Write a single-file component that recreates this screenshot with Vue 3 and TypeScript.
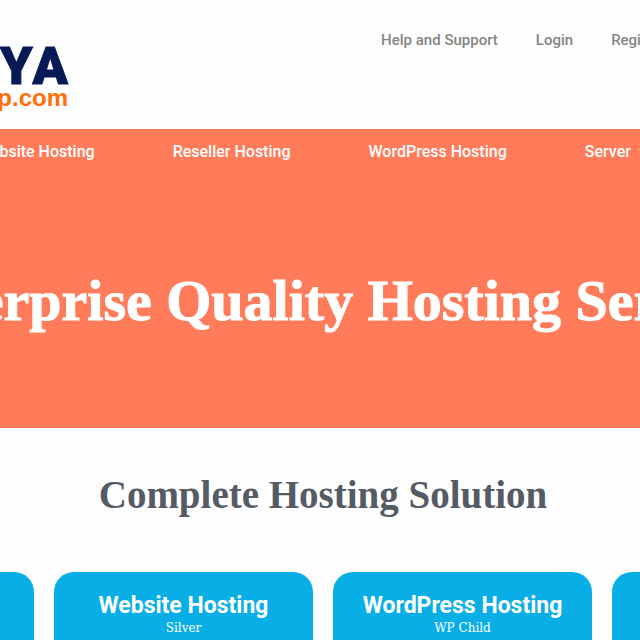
<script setup lang="ts">
interface Plan {
  name: string
  tier: string
}

const accountLinks: string[] = ['Help and Support', 'Login', 'Register']
const services: string[] = ['Website Hosting', 'Reseller Hosting', 'WordPress Hosting']
const plans: Plan[] = [
  { name: '', tier: '' },
  { name: 'Website Hosting', tier: 'Silver' },
  { name: 'WordPress Hosting', tier: 'WP Child' },
  { name: '', tier: '' },
]
</script>

<template>
  <div class="page">
    <header class="top">
      <a class="logo" href="#">
        <span class="logo-name">YA</span>
        <span class="logo-domain">p.com</span>
      </a>
      <nav class="account" aria-label="Account">
        <a v-for="link in accountLinks" :key="link" href="#">{{ link }}</a>
      </nav>
    </header>

    <section class="hero">
      <nav class="services" aria-label="Services">
        <a v-for="service in services" :key="service" href="#">{{ service }}</a>
        <a class="has-menu" href="#">
          Server
          <svg width="10" height="6" viewBox="0 0 10 6" aria-hidden="true">
            <path d="M0 0h10L5 6z" fill="currentColor" />
          </svg>
        </a>
      </nav>
      <div class="banner">
        <h1>Enterprise Quality Hosting Services</h1>
      </div>
    </section>

    <main class="solutions">
      <h2>Complete Hosting Solution</h2>
      <div class="plans">
        <article v-for="(plan, index) in plans" :key="index" class="plan">
          <h3 v-if="plan.name">{{ plan.name }}</h3>
          <p v-if="plan.tier">{{ plan.tier }}</p>
        </article>
      </div>
    </main>
  </div>
</template>

<style>
body {
  margin: 0;
  background: #fdfdfd;
}
html,
body,
#app {
  height: 100%;
}
</style>

<style scoped>
.page {
  display: flex;
  flex-direction: column;
  height: 100%;
  overflow: hidden;
  font-family: Roboto, "Liberation Sans", sans-serif;
  white-space: nowrap;
}
a {
  color: inherit;
  text-decoration: none;
}
h1,
h2,
h3,
p {
  margin: 0;
}
.top {
  display: flex;
  flex: none;
  justify-content: space-between;
  height: 129px;
}
.logo {
  display: flex;
  flex-direction: column;
  align-items: flex-end;
  width: 68px;
  padding-top: 46px;
}
.logo-name {
  color: #081a56;
  font-size: 52px;
  font-weight: 900;
  line-height: 42px;
  font-kerning: none;
  -webkit-text-stroke: 1px #081a56;
}
.logo-domain {
  color: #ff6f0b;
  font-family: "Liberation Sans", sans-serif;
  font-size: 24px;
  font-weight: 700;
  line-height: 20px;
}
.account {
  display: flex;
  gap: 38px;
  margin-right: -27px;
  padding-top: 30px;
  color: #858585;
  font-size: 15px;
  font-weight: 500;
  line-height: 20px;
}
.hero {
  display: flex;
  flex: none;
  flex-direction: column;
  height: 299px;
  background: #ff7b5a;
  color: #fff;
}
.services {
  display: flex;
  gap: 78px;
  margin-left: -23px;
  padding-top: 13px;
  font-size: 16px;
  font-weight: 500;
  line-height: 20px;
}
.has-menu {
  display: flex;
  align-items: center;
  gap: 8px;
}
.banner {
  display: flex;
  justify-content: center;
  padding: 107px 0 0 26px;
}
h1 {
  font-family: "Liberation Serif", serif;
  font-size: 58px;
  font-weight: 700;
  line-height: 64px;
  -webkit-text-stroke: 1px #fff;
}
.solutions {
  display: flex;
  flex: 1;
  flex-direction: column;
  align-items: center;
  gap: 54px;
  min-height: 0;
  padding: 44px 0 0 6px;
}
h2 {
  color: #545b64;
  font-family: "Liberation Serif", serif;
  font-size: 39px;
  font-weight: 700;
  line-height: 46px;
}
.plans {
  display: flex;
  flex: 1;
  gap: 20px;
}
.plan {
  box-sizing: border-box;
  flex: none;
  width: 259px;
  padding-top: 21px;
  border-radius: 20px 20px 0 0;
  background: #0aaee6;
  color: #fff;
  text-align: center;
}
h3 {
  font-size: 23px;
  font-weight: 700;
  line-height: 26px;
}
.plan p {
  font-family: "DejaVu Serif", serif;
  font-size: 12px;
  line-height: 18px;
}
</style>
